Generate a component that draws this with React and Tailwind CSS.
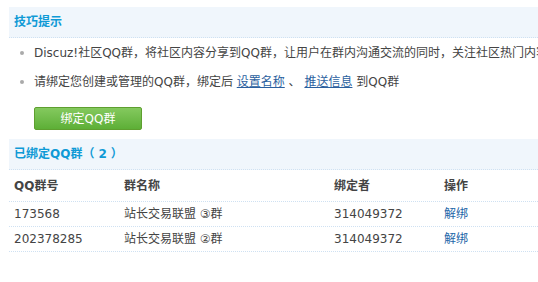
export default function App() {
  const font = { fontFamily: '"DejaVu Sans", "Noto Sans CJK SC", sans-serif' };
  const rows = [
    ["173568", "站长交易联盟 ③群", "314049372"],
    ["202378285", "站长交易联盟 ②群", "314049372"],
  ];
  return (
    <div
      className="w-[538px] h-[282px] overflow-hidden bg-white pt-[7px] pl-[9px] text-[12px] text-[#333]"
      style={font}
    >
      <div className="h-[31px] bg-[#f0f6fc] border-b border-dotted border-[#cfe1f2] px-[5px] flex items-center font-bold text-[#0f9ad6] whitespace-nowrap">
        技巧提示
      </div>
      <ul className="whitespace-nowrap">
        <li className="h-[29px] flex items-center overflow-hidden">
          <span className="shrink-0 ml-[11px] w-[4px] h-[4px] rounded-full bg-[#aaa]" />
          <span className="shrink-0 ml-[10px] text-[#444]">
            Discuz!社区QQ群，将社区内容分享到QQ群，让用户在群内沟通交流的同时，关注社区热门内容
          </span>
        </li>
        <li className="h-[29px] flex items-center overflow-hidden">
          <span className="shrink-0 ml-[11px] w-[4px] h-[4px] rounded-full bg-[#aaa]" />
          <span className="shrink-0 ml-[10px] text-[#444]">
            请绑定您创建或管理的QQ群，绑定后{" "}
            <a className="underline text-[#2b5f9e]">设置名称</a> 、{" "}
            <a className="underline text-[#2b5f9e]">推送信息</a> 到QQ群
          </span>
        </li>
      </ul>
      <div className="mt-[11px] ml-[25px] w-[108px] h-[23px] rounded-[2px] border border-[#5e9f2f] bg-gradient-to-b from-[#84c95e] to-[#5daf36] text-white flex items-center justify-center">
        绑定QQ群
      </div>
      <div className="mt-[9px] h-[31px] bg-[#f0f6fc] border-b border-dotted border-[#cfe1f2] px-[5px] flex items-center font-bold text-[#0f9ad6] whitespace-nowrap">
        已绑定QQ群（<span className="px-[4px]">2</span>）
      </div>
      <div className="grid grid-cols-[110px_210px_110px_1fr] h-[32px] items-center border-b border-dotted border-[#cfe1f2] font-bold text-[#444]">
        <div className="pl-[5px]">QQ群号</div>
        <div className="pl-[5px]">群名称</div>
        <div className="pl-[5px]">绑定者</div>
        <div className="pl-[5px]">操作</div>
      </div>
      {rows.map((r) => (
        <div
          key={r[0]}
          className="grid grid-cols-[110px_210px_110px_1fr] h-[25px] items-center border-b border-dotted border-[#cfe1f2] text-[#444]"
        >
          <div className="pl-[5px]">{r[0]}</div>
          <div className="pl-[5px]">{r[1]}</div>
          <div className="pl-[5px]">{r[2]}</div>
          <div className="pl-[5px] text-[#2366a8]">解绑</div>
        </div>
      ))}
    </div>
  );
}
